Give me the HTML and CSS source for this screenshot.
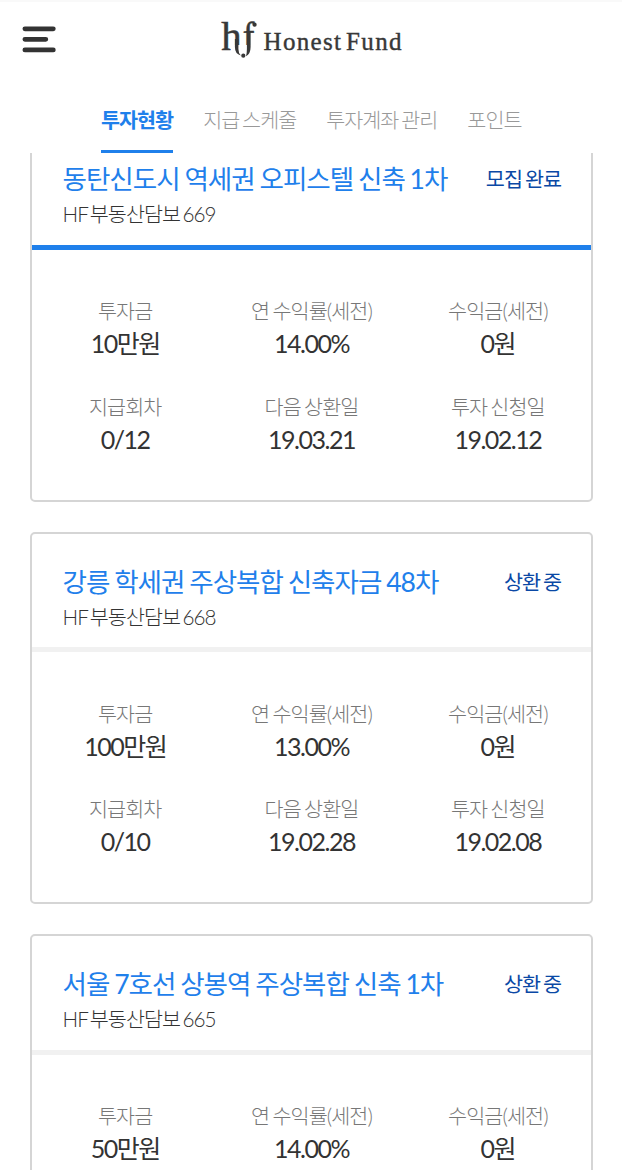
FILE: index.html
```html
<!DOCTYPE html>
<html lang="ko">
<head>
<meta charset="utf-8">
<title>HonestFund</title>
<link rel="stylesheet" href="styles.css">
</head>
<body>
<div class="app">
  <header class="header">
    <button class="menu" aria-label="메뉴">
      <svg width="34" height="28" viewBox="0 0 34 28"><g stroke="#333" stroke-width="4.8" stroke-linecap="round"><path d="M2.9 3.8H31.3M2.9 14.3H23.8M2.9 24.9H31.3"/></g></svg>
    </button>
    <svg class="logo" width="184" height="42" viewBox="0 0 184 42" fill="#383838">
      <clipPath id="feet"><path d="M-2 -2H40V26H10V34H-2Z"/></clipPath>
      <g clip-path="url(#feet)">
        <text class="mark" transform="translate(.3 30.5) scale(1.02 1)" font-size="40">h</text>
        <text class="mark" transform="translate(21.8 31) scale(.88 1)" font-size="40">f</text>
      </g>
      <path d="M13.9 20H17.4V30Q17.4 34 19.8 36.4Q13.9 35 13.9 28Z"/>
      <path d="M25.9 12H29.6V28Q29.6 35 25 37.2Q25.9 34 25.9 30Z"/>
      <circle cx="33.6" cy="5.7" r="2.1"/><circle cx="22.3" cy="36.7" r="2.1"/>
      <text class="name" x="42.5" y="31" textLength="77.5">Honest</text>
      <text class="name" x="125" y="31" textLength="55.5">Fund</text>
    </svg>
  </header>
  <nav class="tabs">
    <a class="tab active">투자현황</a><a class="tab">지급 스케줄</a><a class="tab">투자계좌 관리</a><a class="tab">포인트</a>
  </nav>
  <main class="list">
    <article class="card selected">
      <div class="head"><div><h2>동탄신도시 역세권 오피스텔 신축 1차</h2><p>HF 부동산담보 669</p></div><span class="status">모집 완료</span></div>
      <dl class="stats">
        <div><dt>투자금</dt><dd>10만원</dd></div><div><dt>연 수익률(세전)</dt><dd>14.00%</dd></div><div><dt>수익금(세전)</dt><dd>0원</dd></div>
        <div><dt>지급회차</dt><dd>0/12</dd></div><div><dt>다음 상환일</dt><dd>19.03.21</dd></div><div><dt>투자 신청일</dt><dd>19.02.12</dd></div>
      </dl>
    </article>
    <article class="card">
      <div class="head"><div><h2>강릉 학세권 주상복합 신축자금 48차</h2><p>HF 부동산담보 668</p></div><span class="status">상환 중</span></div>
      <dl class="stats">
        <div><dt>투자금</dt><dd>100만원</dd></div><div><dt>연 수익률(세전)</dt><dd>13.00%</dd></div><div><dt>수익금(세전)</dt><dd>0원</dd></div>
        <div><dt>지급회차</dt><dd>0/10</dd></div><div><dt>다음 상환일</dt><dd>19.02.28</dd></div><div><dt>투자 신청일</dt><dd>19.02.08</dd></div>
      </dl>
    </article>
    <article class="card">
      <div class="head"><div><h2>서울 7호선 상봉역 주상복합 신축 1차</h2><p>HF 부동산담보 665</p></div><span class="status">상환 중</span></div>
      <dl class="stats">
        <div><dt>투자금</dt><dd>50만원</dd></div><div><dt>연 수익률(세전)</dt><dd>14.00%</dd></div><div><dt>수익금(세전)</dt><dd>0원</dd></div>
      </dl>
    </article>
  </main>
</div>
</body>
</html>
```
FILE: styles.css
```css
* { box-sizing: border-box; margin: 0; padding: 0; }
body { background: #fff; color: #333; font-family: Lato, "Noto Sans CJK KR", sans-serif; }
.app { width: 622px; height: 1170px; overflow: hidden; display: flex; flex-direction: column; border-top: 2px solid #f9f9f9; }
.header { height: 86px; flex: none; display: flex; align-items: flex-start; padding: 23px 0 0 22px; }
.menu { border: 0; background: none; line-height: 0; }
.logo { margin: -6px 0 0 165px; overflow: visible; }
.mark, .name { font-family: "Liberation Serif", serif; stroke: #383838; stroke-width: .5px; }
.name { font-size: 25px; stroke-width: .4px; }
.tabs { height: 65px; flex: none; display: flex; gap: 30px; padding-left: 101px; }
.tab { height: 65px; line-height: 64px; font-size: 20.7px; font-weight: 300; letter-spacing: -1px; word-spacing: -1.7px; color: #999; white-space: nowrap; }
.tab.active { color: #1f80eb; font-weight: 700; border-bottom: 3px solid #1f80eb; }
.list { flex: 1; min-height: 0; overflow: hidden; padding: 0 29px 0 30px; }
.card { height: 372.6px; border: 2px solid #d5d5d5; border-radius: 5px; margin-bottom: 29.9px; }
.card.selected { margin-top: -23.7px; }
.head { height: 118.3px; padding: 29px 30px 0 30.5px; display: flex; justify-content: space-between; border-bottom: 5px solid #f1f1f1; }
.selected .head { border-color: #1f80eb; }
.head h2 { font-size: 26.55px; line-height: 38px; font-weight: 400; letter-spacing: -1px; word-spacing: -1px; color: #1f80eb; white-space: nowrap; }
.head p { font-size: 20.7px; line-height: 32px; font-weight: 300; letter-spacing: -.95px; word-spacing: -2.4px; }
.status { font-size: 20.7px; line-height: 38px; letter-spacing: -1px; word-spacing: -1.3px; color: #0a48a5; white-space: nowrap; }
.stats { display: grid; grid-template-columns: repeat(3, 1fr); row-gap: 31px; padding-top: 46.5px; text-align: center; }
.stats dt { font-size: 20.7px; line-height: 31px; font-weight: 300; letter-spacing: -.9px; word-spacing: -1.5px; color: #777; }
.stats dd { font-size: 25px; line-height: 33.5px; letter-spacing: -1.5px; }
```
